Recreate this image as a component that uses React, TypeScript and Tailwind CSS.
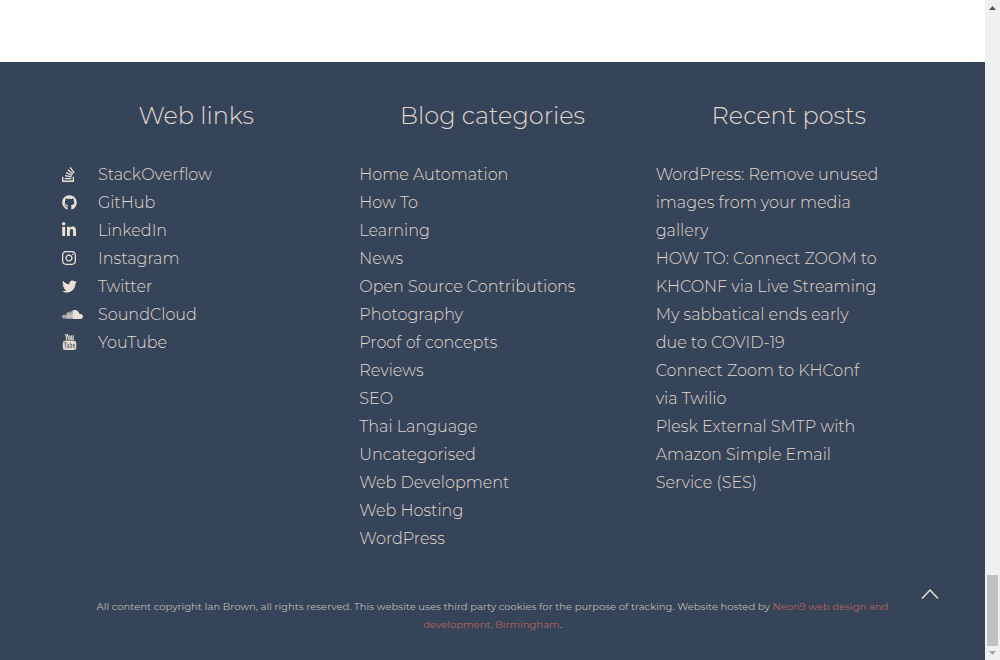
import { FaStackOverflow, FaGithub, FaLinkedinIn, FaInstagram, FaTwitter, FaSoundcloud } from "react-icons/fa";
import { TfiYoutube } from "react-icons/tfi";
import type { ReactNode } from "react";

const links: [string, ReactNode][] = [
  ["StackOverflow", <FaStackOverflow size={17} preserveAspectRatio="xMinYMid" />],
  ["GitHub", <FaGithub size={15} />],
  ["LinkedIn", <FaLinkedinIn size={16} preserveAspectRatio="xMinYMid" />],
  ["Instagram", <FaInstagram size={16} preserveAspectRatio="xMinYMid" />],
  ["Twitter", <FaTwitter size={15} />],
  ["SoundCloud", <FaSoundcloud size={21} />],
  ["YouTube", <TfiYoutube size={16} viewBox="1 0 16 17" stroke="currentColor" strokeWidth={0.3} />],
];

const categories = [
  "Home Automation",
  "How To",
  "Learning",
  "News",
  "Open Source Contributions",
  "Photography",
  "Proof of concepts",
  "Reviews",
  "SEO",
  "Thai Language",
  "Uncategorised",
  "Web Development",
  "Web Hosting",
  "WordPress",
];

const posts = [
  "WordPress: Remove unused images from your media gallery",
  "HOW TO: Connect ZOOM to KHCONF via Live Streaming",
  "My sabbatical ends early due to COVID-19",
  "Connect Zoom to KHConf via Twilio",
  "Plesk External SMTP with Amazon Simple Email Service (SES)",
];

function Column({ title, children }: { title: string; children: ReactNode }) {
  return (
    <section>
      <h2 className="mb-[27px] text-center text-2xl leading-9">{title}</h2>
      {children}
    </section>
  );
}

function Scrollbar() {
  return (
    <div aria-hidden="true" className="flex w-[15px] shrink-0 flex-col items-center bg-[#f0f0f0]">
      <svg width="15" height="15" viewBox="0 0 15 15" fill="#505050"><path d="M4 10 7.500 6 11 10z" /></svg>
      <div className="flex-1" />
      <div className="h-[71px] w-[11px] bg-[#c1c1c1]" />
      <svg width="15" height="15" viewBox="0 0 15 15" fill="#a3a3a3"><path d="M4 5 7.500 9 11 5z" /></svg>
    </div>
  );
}

export default function App() {
  return (
    <div className="flex min-h-screen bg-white font-[Montserrat,sans-serif] font-light text-[#e0d7cd]">
      <div className="flex min-w-0 flex-1 flex-col pt-[62px]">
        <footer className="flex flex-1 flex-col bg-[#364459] pt-9">
          <div className="grid grid-cols-3 gap-x-7 px-[62px] text-base leading-7">
            <Column title="Web links">
              <ul>
                {links.map(([name, icon]) => (
                  <li key={name}>
                    <a href="#" className="flex items-center">
                      <span className="flex w-9 pb-0.5 text-[#ece1d5]">{icon}</span>
                      {name}
                    </a>
                  </li>
                ))}
              </ul>
            </Column>
            <Column title="Blog categories">
              <ul className="pl-px">
                {categories.map((name) => (
                  <li key={name}><a href="#">{name}</a></li>
                ))}
              </ul>
            </Column>
            <Column title="Recent posts">
              <ul className="pr-11 pl-px">
                {posts.map((title) => (
                  <li key={title}><a href="#">{title}</a></li>
                ))}
              </ul>
            </Column>
          </div>
          <div className="mt-[45px] px-20 pb-[27px]">
            <p className="text-center text-[10px] leading-[18px] font-normal text-[#bfbab7]">
              All content copyright Ian Brown, all rights reserved. This website uses third party cookies for the purpose of tracking. Website hosted by{" "}
              <a href="#" className="text-[#b9635f]">Neon9 web design and development, Birmingham</a>.
            </p>
          </div>
        </footer>
      </div>
      <button aria-label="Back to top" className="fixed right-[60px] bottom-14 flex h-5 w-5 items-center justify-center text-[#ece1d5]">
        <svg width="18" height="12" viewBox="0 0 18 12" fill="none" stroke="currentColor" strokeWidth="1.5"><path d="M1 10.500 9 2l8 8.500" /></svg>
      </button>
      <Scrollbar />
    </div>
  );
}
